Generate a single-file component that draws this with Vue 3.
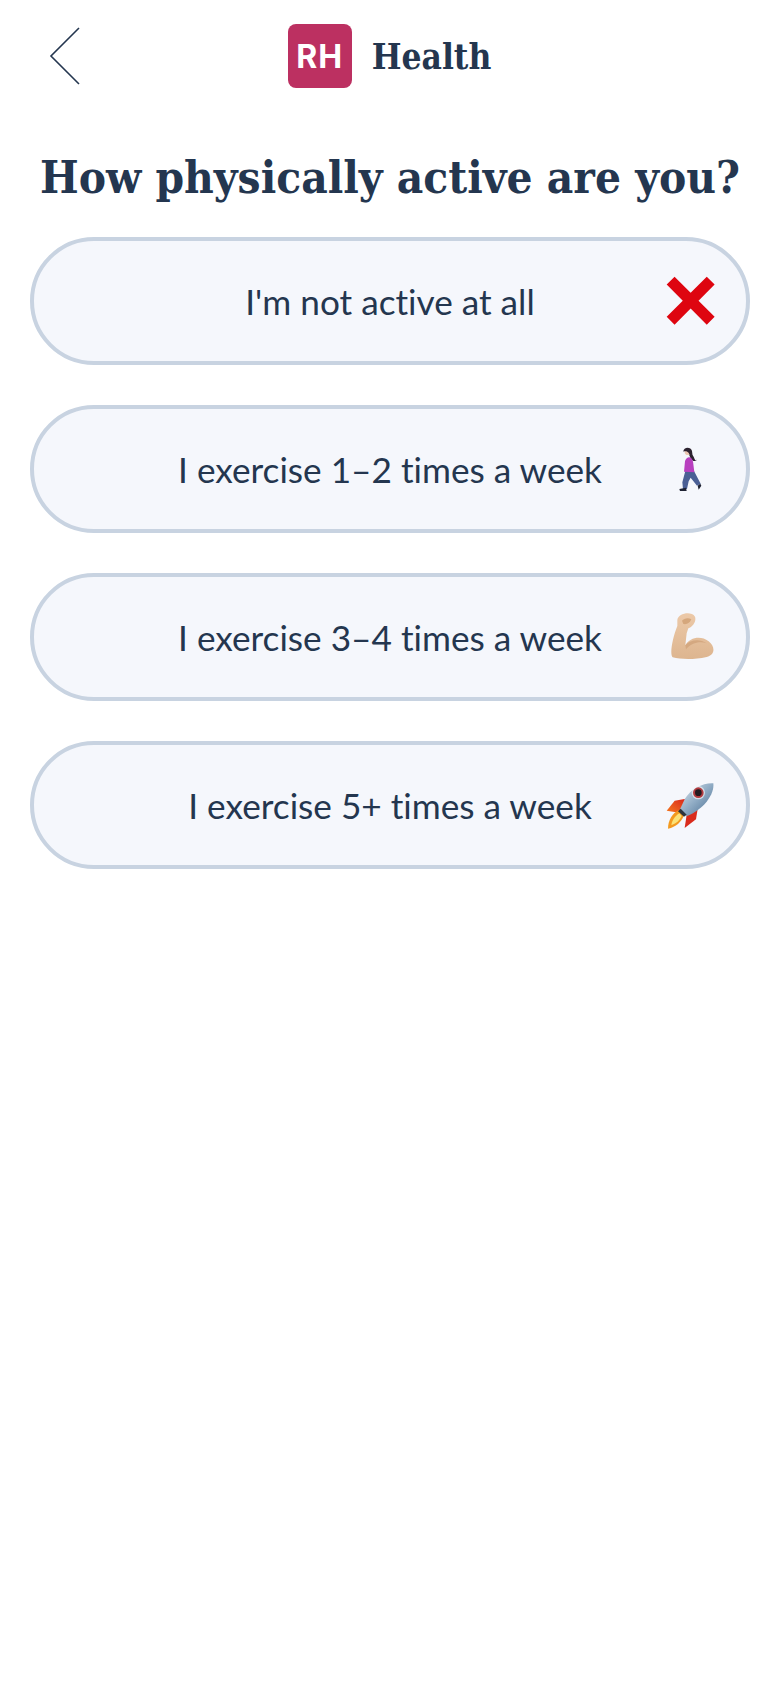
<template>
  <div class="page">
    <header class="top-bar">
      <button class="back" aria-label="Back">
        <svg width="32" height="60" viewBox="0 0 32 60">
          <path d="M30 2 L2 30 L30 58" fill="none" stroke="#24364f" stroke-width="1.6" />
        </svg>
      </button>
      <div class="brand">
        <span class="logo">RH</span>
        <span class="brand-name">Health</span>
      </div>
    </header>

    <h1 class="title">How physically active are you?</h1>

    <div class="options">
      <button v-for="item in options" :key="item.id" class="option">
        <span>{{ item.label }}</span>
        <span class="option-icon">
          <svg v-if="item.id === 'none'" width="50" height="50" viewBox="78 50 146 146">
            <path d="M103 52 L150 99 L197 52 L220 75 L173 122 L220 169 L197 192 L150 145 L103 192 L80 169 L127 122 L80 75 Z" fill="#de0510" />
          </svg>
          <svg v-else-if="item.id === 'walk'" width="50" height="50" viewBox="48 45 150 150">
            <path d="M118 78 C130 72 132 88 136 94 L141 92 C136 98 128 98 124 90 Z" fill="#2c2230" />
            <path d="M106 126 L97 160 L99 180 L111 180 L116 157 L122 146 L141 170 L152 164 L132 126 Z" fill="#4a5f95" />
            <path d="M88 180 L108 176 L110 186 L90 186 Z M143 170 L151 164 L154 170 L146 182 Z" fill="#1e2233" />
            <path d="M105 96 C112 78 126 84 129 98 L133 130 L102 128 Z" fill="#b83fbf" />
            <circle cx="114" cy="68" r="10" fill="#ecc8b2" />
            <path d="M100 68 C100 54 122 52 126 66 L128 82 L120 86 C120 72 112 64 100 68 Z" fill="#2c2230" />
          </svg>
          <svg v-else-if="item.id === 'muscle'" width="50" height="50" viewBox="48 36 150 150">
            <defs>
              <linearGradient id="armShade" x1="0" y1="0" x2="0" y2="1">
                <stop offset="0" stop-color="#ecc9a8" />
                <stop offset="1" stop-color="#ddb58f" />
              </linearGradient>
            </defs>
            <path d="M82 60 C84 40 124 32 135 50 C140 64 128 80 115 85 L110 100 L106 136 C120 112 152 106 176 124 C196 140 196 164 170 171 C130 180 92 178 68 172 C58 164 68 112 82 78 Z" fill="url(#armShade)" />
            <path d="M106 136 C122 118 150 116 170 130 C150 122 124 128 108 148 Z" fill="#d4a880" />
            <path d="M96 62 C102 54 116 52 124 58 C120 68 112 74 100 72 Z" fill="#d5a77c" />
          </svg>
          <svg v-else width="50" height="50" viewBox="48 30 150 150">
            <defs>
              <linearGradient id="rocketBody" x1="0" y1="0" x2="1" y2="1">
                <stop offset="0" stop-color="#dfe9f0" />
                <stop offset="0.5" stop-color="#8fabc4" />
                <stop offset="1" stop-color="#456a8e" />
              </linearGradient>
              <linearGradient id="finFill" x1="1" y1="0" x2="0" y2="1">
                <stop offset="0" stop-color="#d8231c" />
                <stop offset="1" stop-color="#f57a1f" />
              </linearGradient>
            </defs>
            <path d="M50 122 L74 92 L108 86 L88 128 Z" fill="url(#finFill)" />
            <path d="M104 174 L110 134 L144 110 L138 148 Z" fill="#d92b1c" />
            <path d="M54 176 C54 150 68 130 86 120 L102 136 C94 156 78 172 54 176 Z" fill="#f39a1f" />
            <path d="M64 166 C66 150 76 138 88 130 L95 138 C90 150 80 160 64 166 Z" fill="#fbe276" />
            <path d="M190 40 C160 38 122 56 104 88 L90 118 L110 138 C122 134 150 120 170 95 C186 75 192 55 190 40 Z" fill="url(#rocketBody)" />
            <path d="M84 124 L92 116 L110 134 L102 140 Z" fill="#2e343c" />
            <circle cx="145" cy="68" r="20" fill="#f0f3f6" opacity="0.7" />
            <circle cx="145" cy="68" r="16" fill="#b23b3f" />
            <circle cx="145" cy="68" r="10" fill="#231a20" />
          </svg>
        </span>
      </button>
    </div>
  </div>
</template>

<script setup>
  const options = [
    { id: 'none', label: "I'm not active at all" },
    { id: 'walk', label: 'I exercise 1–2 times a week' },
    { id: 'muscle', label: 'I exercise 3–4 times a week' },
    { id: 'rocket', label: 'I exercise 5+ times a week' }
  ]
</script>

<style>
  body {
    background: #ffffff;
  }
</style>

<style scoped>
  .page {
    min-height: 1688px;
    padding: 24px 30px 0;
    box-sizing: border-box;
    background: #ffffff;
    font-family: 'Lato', 'Liberation Sans', sans-serif;
    color: #24364f;
  }

  .top-bar {
    display: grid;
    grid-template-columns: 1fr auto 1fr;
    align-items: center;
    height: 64px;
  }

  .back {
    justify-self: start;
    margin-left: 19px;
    padding: 0;
    border: none;
    background: none;
    display: flex;
  }

  .brand {
    display: flex;
    align-items: center;
    gap: 20px;
    margin-left: -1px;
  }

  .logo {
    width: 64px;
    height: 64px;
    border-radius: 8px;
    background: #bc3061;
    color: #ffffff;
    font-family: 'Inter', sans-serif;
    font-weight: 700;
    font-size: 32px;
    letter-spacing: 1px;
    display: flex;
    align-items: center;
    justify-content: center;
  }

  .brand-name {
    font-family: 'DejaVu Serif Condensed', 'DejaVu Serif', serif;
    font-stretch: condensed;
    font-weight: 700;
    font-size: 35px;
  }

  .title {
    margin: 58px -10px 29px;
    font-family: 'DejaVu Serif Condensed', 'DejaVu Serif', serif;
    font-stretch: condensed;
    font-weight: 700;
    font-size: 45.5px;
    line-height: 62px;
    text-align: center;
    white-space: nowrap;
  }

  .options {
    display: flex;
    flex-direction: column;
    gap: 40px;
  }

  .option {
    position: relative;
    height: 128px;
    border: 4px solid #c8d3e1;
    border-radius: 64px;
    background: #f5f7fc;
    color: #24364f;
    font-family: inherit;
    font-size: 35.2px;
    font-variant-ligatures: none;
    text-align: center;
    padding: 0;
  }

  .option-icon {
    position: absolute;
    right: 30px;
    top: 50%;
    transform: translateY(-50%);
    display: flex;
  }
</style>
